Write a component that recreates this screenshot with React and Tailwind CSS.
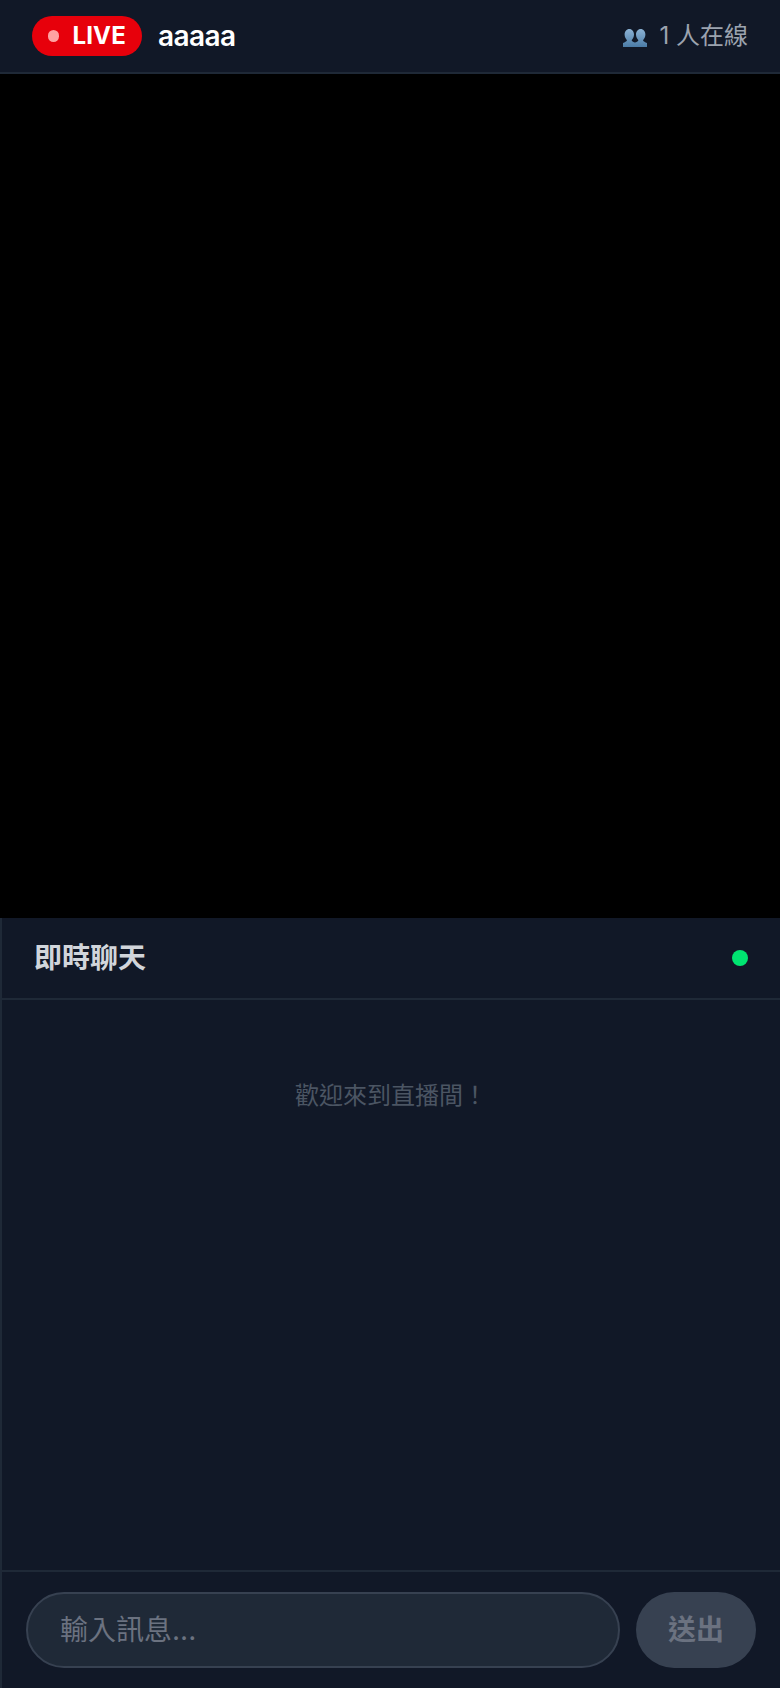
const font = { fontFamily: '"Inter", "Noto Sans CJK TC", sans-serif' };

function People() {
  return (
    <svg width="24" height="22" viewBox="0 0 24 22" aria-hidden="true">
      <defs>
        <linearGradient id="pg" x1="0" y1="0" x2="0" y2="1">
          <stop offset="0.1" stopColor="#86add0" />
          <stop offset="1" stopColor="#4a7ba6" />
        </linearGradient>
      </defs>
      <path
        fill="url(#pg)"
        d="M6.3 4C9.1 4 11 6.6 11 9.6C11 12 9.9 14 8.6 15.2C9.3 16.6 10.6 17.2 12 17.4C13.4 17.2 14.7 16.6 15.4 15.2C14.1 14 13 12 13 9.6C13 6.6 14.9 4 17.7 4C20.5 4 22.4 6.6 22.4 9.6C22.4 12 21.3 14 20 15.2C20.6 16.6 22 17.2 24 18V22H0V18C2 17.2 3.4 16.6 4 15.2C2.7 14 1.6 12 1.6 9.6C1.6 6.6 3.5 4 6.3 4Z"
      />
    </svg>
  );
}

export default function App() {
  return (
    <div style={font} className="flex h-[1688px] w-[780px] flex-col bg-[#111827]">
      <header className="flex h-[74px] shrink-0 items-center justify-between border-b-2 border-[#1f2937] px-8">
        <div className="flex items-center gap-4">
          <div className="flex h-10 w-[110px] items-center gap-[13px] rounded-full bg-[#e7000b] px-4 text-2xl font-bold tracking-[0.2px] text-white">
            <span className="size-3 rounded-full bg-[#ffa2a2]" />
            <span>LIVE</span>
          </div>
          <h1 className="text-[28px] font-semibold tracking-[-0.6px] text-white">aaaaa</h1>
        </div>
        <div className="flex items-center gap-3 text-2xl text-[#9ca3af]">
          <People />
          <span>1 人在線</span>
        </div>
      </header>
      <div className="h-[844px] shrink-0 bg-black" />
      <section className="flex min-h-0 flex-1 flex-col border-l-2 border-[#1f2937]">
        <div className="flex h-[82px] shrink-0 items-center justify-between border-b-2 border-[#1f2937] px-8">
          <h2 className="text-[28px] font-semibold text-[#d1d5db]">即時聊天</h2>
          <span className="size-4 rounded-full bg-[#00e571]" />
        </div>
        <div className="flex-1 px-8 pt-20 text-center text-2xl text-[#4b5563]">歡迎來到直播間！</div>
        <div className="flex shrink-0 gap-4 border-t-2 border-[#1f2937] px-6 py-5">
          <input
            readOnly
            placeholder="輸入訊息..."
            className="h-[76px] min-w-0 flex-1 rounded-full border-2 border-[#374151] bg-[#1f2937] px-8 text-[28px] placeholder:text-[#6b7280]"
          />
          <button className="h-[76px] w-[120px] shrink-0 rounded-full bg-[#374151] text-[28px] font-semibold text-[#6b7280]">送出</button>
        </div>
      </section>
    </div>
  );
}
